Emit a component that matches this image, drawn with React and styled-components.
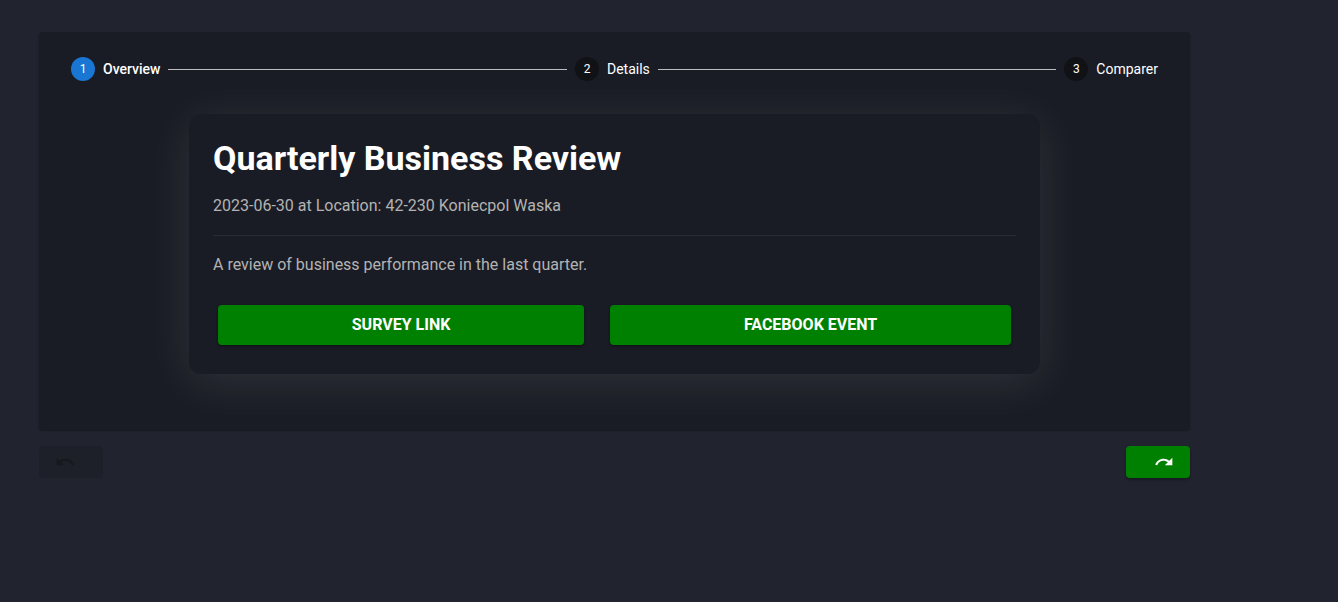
import React from "react";
import styled, { createGlobalStyle } from "styled-components";
import { MdRedo, MdUndo } from "react-icons/md";

const GlobalStyle = createGlobalStyle`
  *, *::before, *::after { box-sizing: border-box; }
  body {
    margin: 0;
    background: #21232e;
    color: #fff;
    font-family: Roboto, "Liberation Sans", sans-serif;
    font-size: 16px;
    line-height: 24px;
    -webkit-font-smoothing: antialiased;
  }
`;

const Page = styled.main`
  max-width: 1230px;
  padding: 32px 40px 32px 39px;
`;

const Panel = styled.section`
  padding: 24px 32px 56px;
  border-radius: 4px;
  background: #1a1c25;
  box-shadow: 0 1px 2px rgba(0, 0, 0, 0.3);
`;

const Stepper = styled.ol`
  display: flex;
  align-items: center;
  gap: 8px;
  margin: 0 0 32px;
  padding: 0;
  list-style: none;
`;

const Step = styled.li`
  display: flex;
  align-items: center;
  gap: 8px;
  font-size: 14px;
  line-height: 26px;
  font-weight: ${(p) => (p.$active ? 500 : 400)};
`;

const StepNumber = styled.span`
  width: 24px;
  height: 24px;
  border-radius: 50%;
  background: ${(p) => (p.$active ? "#1976d2" : "#111216")};
  font-size: 12px;
  line-height: 24px;
  font-weight: 400;
  text-align: center;
`;

const Connector = styled.li`
  flex: 1;
  height: 1px;
  background: #bdbdbd;
`;

const Card = styled.article`
  max-width: 851px;
  margin: 0 auto;
  padding: 24px;
  border-radius: 12px;
  background: #1a1c25;
  box-shadow: 0 8px 48px rgba(255, 255, 255, 0.1);
`;

const Title = styled.h1`
  margin: 0 0 16px;
  font-size: 34px;
  line-height: 40px;
  font-weight: 700;
`;

const Text = styled.p`
  margin: 0;
  color: #b3b3b3;
`;

const Divider = styled.hr`
  height: 1px;
  margin: 17px 0;
  border: 0;
  background: #2b2c32;
`;

const Links = styled.div`
  display: flex;
  gap: 16px;
  margin-top: 23px;
`;

const LinkButton = styled.a`
  flex: 1 1 auto;
  margin: 5px;
  padding: 8px 16px;
  border-radius: 4px;
  background: #008000;
  color: #fff;
  font-weight: 700;
  text-align: center;
  text-transform: uppercase;
  text-decoration: none;
  box-shadow: 0 2px 3px rgba(0, 0, 0, 0.3);
`;

const Actions = styled.nav`
  display: flex;
  justify-content: space-between;
  margin-top: 16px;
`;

const NavButton = styled.button`
  display: flex;
  align-items: center;
  justify-content: ${(p) => (p.$forward ? "flex-end" : "flex-start")};
  width: 64px;
  height: 32px;
  padding: 0 16px;
  border: 0;
  border-radius: 4px;
  background: #008000;
  color: #fff;
  font-size: 20px;
  box-shadow: 0 2px 3px rgba(0, 0, 0, 0.3);

  &:disabled {
    background: #1e2029;
    color: #17181e;
    box-shadow: none;
  }
`;

const steps = ["Overview", "Details", "Comparer"];

export default function App() {
  return (
    <>
      <GlobalStyle />
      <Page>
        <Panel>
          <Stepper>
            {steps.map((label, i) => (
              <React.Fragment key={label}>
                {i > 0 && <Connector aria-hidden="true" />}
                <Step $active={i === 0} aria-current={i === 0 ? "step" : undefined}>
                  <StepNumber $active={i === 0}>{i + 1}</StepNumber>
                  {label}
                </Step>
              </React.Fragment>
            ))}
          </Stepper>
          <Card>
            <Title>Quarterly Business Review</Title>
            <Text>2023-06-30 at Location: 42-230 Koniecpol Waska</Text>
            <Divider />
            <Text>A review of business performance in the last quarter.</Text>
            <Links>
              <LinkButton href="#survey">Survey link</LinkButton>
              <LinkButton href="#facebook">Facebook event</LinkButton>
            </Links>
          </Card>
        </Panel>
        <Actions>
          <NavButton type="button" disabled aria-label="Back">
            <MdUndo />
          </NavButton>
          <NavButton type="button" $forward aria-label="Next">
            <MdRedo />
          </NavButton>
        </Actions>
      </Page>
    </>
  );
}
